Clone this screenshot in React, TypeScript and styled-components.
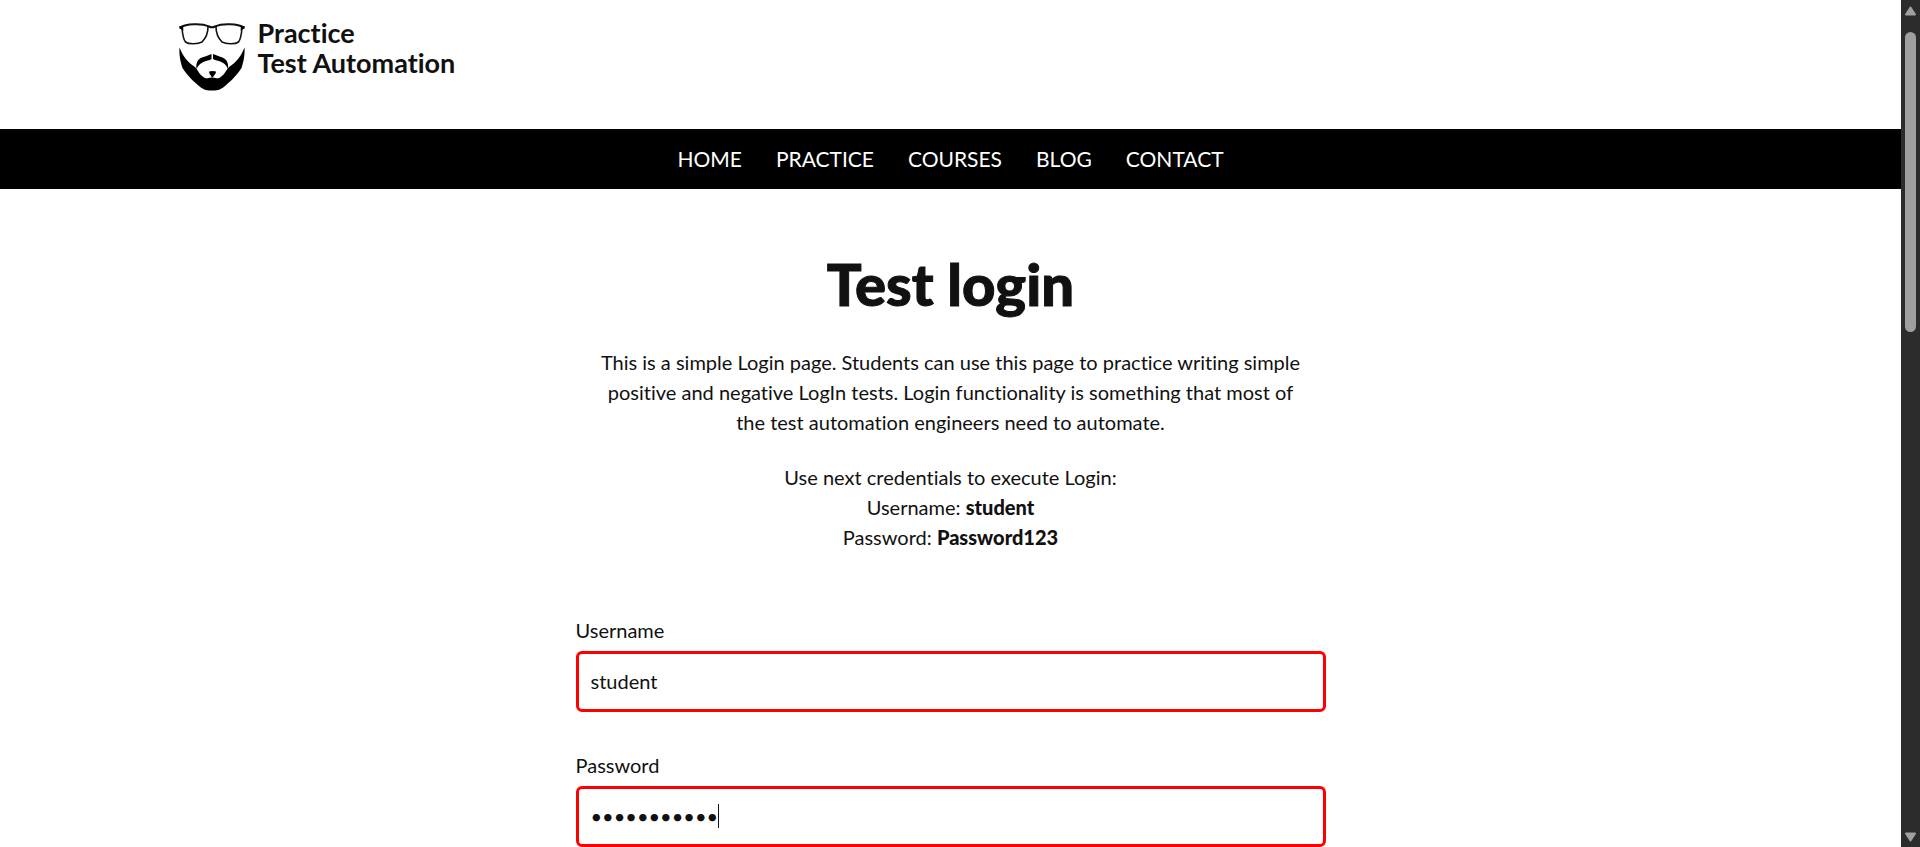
import React from "react";
import styled, { createGlobalStyle } from "styled-components";

const GlobalStyle = createGlobalStyle`
  *, *::before, *::after { box-sizing: border-box; }
  body {
    margin: 0;
    background: #fff;
    color: #111;
    font-family: Lato, sans-serif;
    font-size: 20px;
    line-height: 30px;
    font-variant-ligatures: none;
  }
`;

const Screen = styled.div`
  display: flex;
  height: 100vh;
  overflow: hidden;
`;

const Page = styled.div`
  flex: 1;
  min-width: 0;
  overflow: hidden;
`;

const Header = styled.header`
  max-width: 1560px;
  margin: 0 auto;
  padding: 18px 7px 21px;
`;

const Brand = styled.a`
  display: flex;
  width: fit-content;
  align-items: flex-start;
  gap: 12px;
  height: 90px;
  color: #111;
  font-size: 27px;
  font-weight: 700;
  line-height: 30px;
  text-decoration: none;

  svg {
    width: 68px;
    height: 80px;
  }
`;

const NavBar = styled.nav`
  background: #000;
`;

const NavList = styled.ul`
  display: flex;
  justify-content: center;
  gap: 34px;
  margin: 0;
  padding: 15px 0;
  list-style: none;
`;

const NavLink = styled.a`
  color: #fff;
  font-size: 21px;
  text-decoration: none;
  text-transform: uppercase;
`;

const Content = styled.main`
  max-width: 750px;
  margin: 0 auto;
  padding: 60px 0;
`;

const Title = styled.h1`
  margin: 0 0 28px;
  font-size: 58px;
  font-weight: 900;
  line-height: 70px;
  text-align: center;
  -webkit-text-stroke: 1px #111;
`;

const Intro = styled.div`
  padding: 0 25px;
  text-align: center;

  p {
    margin: 0 0 25px;
  }

  strong {
    font-weight: 900;
  }
`;

const Form = styled.form`
  display: grid;
  gap: 38px;
  padding-top: 38px;
`;

const Field = styled.div`
  display: grid;
  gap: 6px;
`;

const Control = styled.div`
  position: relative;
`;

const Input = styled.input`
  display: block;
  width: 100%;
  height: 61px;
  padding: 0 12px 2px;
  border: 3px solid #f00;
  border-radius: 6px;
  outline: none;
  background: #fff;
  color: #111;
  caret-color: transparent;
  font: inherit;
`;

const Caret = styled.span`
  position: absolute;
  top: 18px;
  left: 142px;
  width: 1px;
  height: 24px;
  background: #111;
`;

const ScrollBar = styled.div`
  display: flex;
  flex-direction: column;
  align-items: center;
  width: 19px;
  padding: 5px 0 4px;
  background: #2c2c2c;

  svg {
    width: 13px;
    height: 11px;
  }
`;

const Thumb = styled.div`
  width: 11px;
  height: 300px;
  margin: 16px 0 auto;
  border-radius: 6px;
  background: #9f9f9f;
`;

const links = ["Home", "Practice", "Courses", "Blog", "Contact"];

function BeardLogo() {
  return (
    <svg viewBox="0 0 68 80" aria-hidden="true">
      <g transform="translate(0 -6)">
        <g fill="none" stroke="#111">
          <path d="M2 15.5C8 11.5 24 11 31 14.5C33 15.5 35 15.5 37 14.5C44 11 60 11.500 66 15.500" strokeWidth="2" />
          <path d="M4 16C4.500 22 5 27 7.500 30C11 32.500 20 32 24 30C28 26 30 20 30 15" strokeWidth="1.600" />
          <path d="M64 16C63.500 22 63 27 60.500 30C57 32.500 48 32 44 30C40 26 38 20 38 15" strokeWidth="1.600" />
        </g>
        <path d="M1 14.500L5 14L5.500 18.500L1.500 16.500ZM67 14.500L63 14L62.500 18.500L66.500 16.500Z" />
        <path d="M1.500 35.500C5 44 9 50 17 55C20 58 22 64 27 66C30 67 31 65 34 65.500C37 65 38 67 41 66C46 64 48 58 51 55C59 50 63 44 66.500 35.500C67 41 66 49 63.500 56C60 62 52 70 47 74C42 78.500 38 78.500 34 78.500C30 78.500 26 78.500 21 74C16 70 8 62 4.500 56C2 49 1 41 1.500 35.500Z" />
        <path d="M33.500 42V47C29 50 23 48 18.500 57C17.500 49 21 46 25.500 45C29 44 31 43 33.500 42ZM35 42C38 43 40 44 43 45C47 46 51 49 50 57C46 48 40 50 35 47Z" />
        <path d="M31 59.500C33 58.800 36 58.800 38 59.500C38 62 36 63 35 65H33.500C33 63 31 62 31 59.500Z" />
      </g>
    </svg>
  );
}

export default function App() {
  return (
    <Screen>
      <GlobalStyle />
      <Page>
        <Header>
          <Brand href="#">
            <BeardLogo />
            <span>
              Practice
              <br />
              Test Automation
            </span>
          </Brand>
        </Header>
        <NavBar>
          <NavList>
            {links.map((label) => (
              <li key={label}>
                <NavLink href="#">{label}</NavLink>
              </li>
            ))}
          </NavList>
        </NavBar>
        <Content>
          <Title>Test login</Title>
          <Intro>
            <p>
              This is a simple Login page. Students can use this page to practice writing simple
              positive and negative LogIn tests. Login functionality is something that most of the
              test automation engineers need to automate.
            </p>
            <p>
              Use next credentials to execute Login:
              <br />
              Username: <strong>student</strong>
              <br />
              Password: <strong>Password123</strong>
            </p>
          </Intro>
          <Form>
            <Field>
              <label htmlFor="username">Username</label>
              <Control>
                <Input id="username" type="text" defaultValue="student" />
              </Control>
            </Field>
            <Field>
              <label htmlFor="password">Password</label>
              <Control>
                <Input id="password" type="password" defaultValue="Password123" autoFocus />
                <Caret />
              </Control>
            </Field>
          </Form>
        </Content>
      </Page>
      <ScrollBar aria-hidden="true">
        <svg viewBox="0 0 13 11">
          <path d="M6.500 2.500L11 9.500H2Z" fill="#9f9f9f" stroke="#9f9f9f" strokeWidth="2" strokeLinejoin="round" />
        </svg>
        <Thumb />
        <svg viewBox="0 0 13 11">
          <path d="M6.500 8.500L11 1.500H2Z" fill="#9f9f9f" stroke="#9f9f9f" strokeWidth="2" strokeLinejoin="round" />
        </svg>
      </ScrollBar>
    </Screen>
  );
}
